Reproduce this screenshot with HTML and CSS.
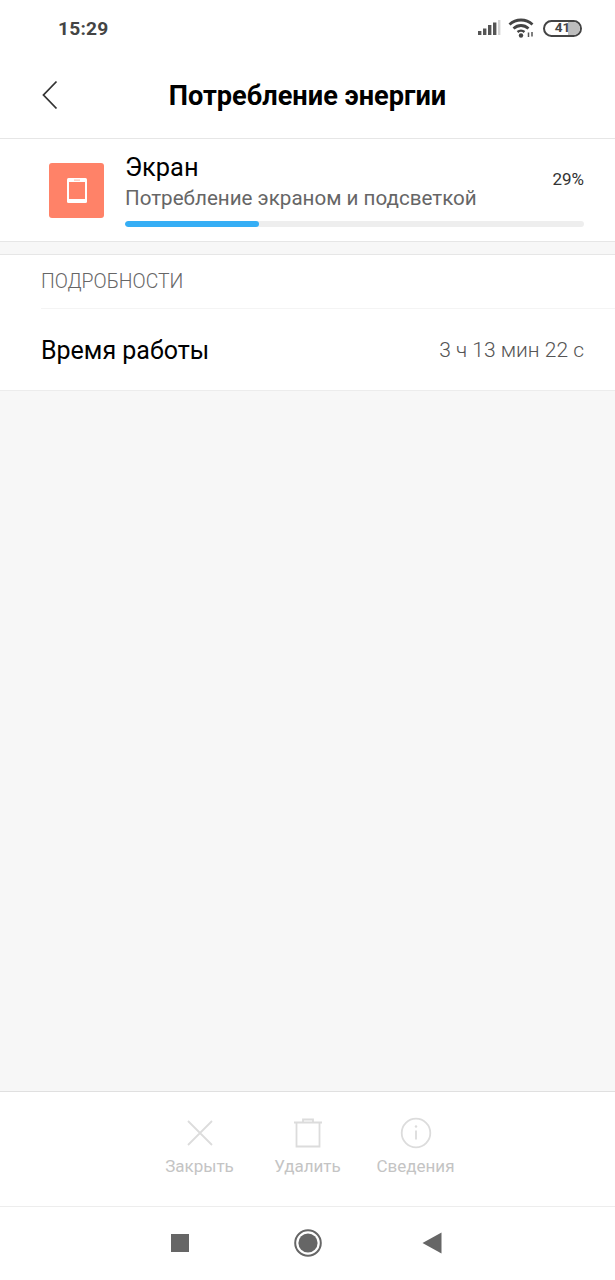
FILE: index.html
```html
<!DOCTYPE html>
<html lang="ru">
<head>
<meta charset="utf-8">
<title>Потребление энергии</title>
<link rel="stylesheet" href="styles.css">
</head>
<body>
<div class="screen">
  <div class="status">
    <span class="time">15:29</span>
    <div class="status-icons">
      <svg class="signal" width="24" height="18" viewBox="0 0 24 18">
        <rect x="1" y="12" width="3.4" height="4" fill="#555"/>
        <rect x="6" y="9.5" width="3.4" height="6.5" fill="#555"/>
        <rect x="11" y="6" width="3.4" height="10" fill="#555"/>
        <rect x="16" y="3.5" width="3.4" height="12.5" fill="#555"/>
        <rect x="21" y="1" width="2.4" height="15" fill="#d4d4d4"/>
      </svg>
      <svg class="wifi" width="28" height="20" viewBox="0 0 28 20">
        <path d="M1.5 6.5C8 .5 18 .5 24.500 6.500" fill="none" stroke="#444" stroke-width="2.800"/>
        <path d="M5.500 10.500C10 6.500 16 6.500 20.500 10.500" fill="none" stroke="#444" stroke-width="2.800"/>
        <path d="M9.500 14C11.500 12.300 14.500 12.300 16.500 14" fill="none" stroke="#444" stroke-width="2.400"/>
        <circle cx="13" cy="17.500" r="2.200" fill="#444"/>
        <path d="M20.500 19v-4.500M24 14v4.500" stroke="#555" stroke-width="1.500"/>
      </svg>
      <div class="battery"><div class="battery-fill"></div><span class="battery-num">41</span></div>
    </div>
  </div>

  <header class="header">
    <svg class="back" width="18" height="30" viewBox="0 0 18 30">
      <path d="M15.500 1.500 2.500 15l13 13.500" fill="none" stroke="#333" stroke-width="1.800"/>
    </svg>
    <h1 class="title">Потребление энергии</h1>
  </header>

  <section class="usage">
    <div class="app-icon">
      <svg width="20" height="25" viewBox="0 0 20 25">
        <rect x="0" y="0" width="20" height="25" rx="1.500" fill="#fff"/>
        <rect x="2" y="4" width="16" height="17" fill="#ff8268"/>
        <rect x="7" y="1.500" width="6" height="1.300" fill="#ffc6b8"/>
      </svg>
    </div>
    <div class="usage-body">
      <div class="usage-top">
        <div class="usage-text">
          <div class="usage-name">Экран</div>
          <div class="usage-desc">Потребление экраном и подсветкой</div>
        </div>
        <div class="usage-pct">29%</div>
      </div>
      <div class="bar"><div class="bar-fill" style="width:29.2%"></div></div>
    </div>
  </section>

  <div class="gap"></div>

  <section class="details">
    <div class="details-head">ПОДРОБНОСТИ</div>
    <div class="details-row">
      <span class="row-label">Время работы</span>
      <span class="row-value">3 ч 13 мин 22 с</span>
    </div>
  </section>

  <div class="filler"></div>

  <nav class="toolbar">
    <div class="tool">
      <svg width="32" height="32" viewBox="0 0 32 32">
        <path d="M4 4l24 24M28 4 4 28" stroke="#dcdcdc" stroke-width="1.800" fill="none"/>
      </svg>
      <span>Закрыть</span>
    </div>
    <div class="tool">
      <svg width="32" height="32" viewBox="0 0 32 32">
        <path d="M2 5.500h28M4.500 5.500v24h23v-24M11 5V2.500h10V5" stroke="#dcdcdc" stroke-width="1.800" fill="none"/>
      </svg>
      <span>Удалить</span>
    </div>
    <div class="tool">
      <svg width="32" height="32" viewBox="0 0 32 32">
        <circle cx="16" cy="16" r="14.300" stroke="#dcdcdc" stroke-width="1.800" fill="none"/>
        <path d="M16 13.500v9" stroke="#dcdcdc" stroke-width="1.800"/>
        <circle cx="16" cy="9.500" r="1.200" fill="#dcdcdc"/>
      </svg>
      <span>Сведения</span>
    </div>
  </nav>

  <nav class="sysnav">
    <svg width="20" height="20" viewBox="0 0 20 20"><rect x="1" y="1" width="18" height="18" fill="#666"/></svg>
    <svg width="28" height="28" viewBox="0 0 28 28">
      <circle cx="14" cy="14" r="12.800" fill="none" stroke="#666" stroke-width="2"/>
      <circle cx="14" cy="14" r="9.600" fill="#666"/>
    </svg>
    <svg class="sys-back" width="20" height="22" viewBox="0 0 20 22"><path d="M19.500 0.500v21L.5 11z" fill="#666"/></svg>
  </nav>
</div>
</body>
</html>
```
FILE: styles.css
```css
* { box-sizing: border-box; }
html, body { margin: 0; padding: 0; }
body { font-family: Roboto, "Noto Sans", sans-serif; background: #fff; }
.screen { width: 615px; height: 1280px; display: flex; flex-direction: column; background: #f7f7f7; overflow: hidden; }

.status { height: 56px; flex: none; background: #fff; display: flex; justify-content: space-between; align-items: center; padding: 0 33px 0 58px; }
.time { font-size: 19.2px; font-weight: 700; color: #444; letter-spacing: .2px; }
.status-icons { display: flex; align-items: center; }
.signal { margin-right: 7px; }
.wifi { margin-right: 7px; }
.battery { position: relative; width: 39px; height: 17px; border: 2px solid #444; border-radius: 9px; overflow: hidden; display: flex; align-items: center; justify-content: center; }
.battery-fill { position: absolute; right: 0; top: 0; bottom: 0; width: 12px; background: #bdbdbd; }
.battery-num { position: relative; font-size: 13.5px; font-weight: 700; color: #444; line-height: 1; }

.header { height: 83px; flex: none; background: #fff; border-bottom: 1px solid #e6e6e6; display: flex; align-items: center; justify-content: center; position: relative; padding-bottom: 3px; }
.back { position: absolute; left: 41px; top: 24px; }
.title { margin: 0; font-size: 27.2px; font-weight: 700; color: #000; line-height: 30px; }

.usage { height: 103px; flex: none; background: #fff; border-bottom: 1px solid #e6e6e6; display: flex; padding: 0 31px 0 49px; }
.app-icon { width: 55px; height: 55px; flex: none; margin-top: 24px; background: #ff8268; border-radius: 3px; display: flex; align-items: center; justify-content: center; }
.usage-body { flex: 1; margin-left: 21px; padding-top: 13px; }
.usage-top { display: flex; justify-content: space-between; }
.usage-name { font-size: 25.4px; line-height: 30px; color: #000; }
.usage-desc { font-size: 20.6px; line-height: 30px; color: #666; margin-top: 1px; }
.usage-pct { font-size: 17px; line-height: 20px; color: #333; margin-top: 17px; }
.bar { height: 6px; background: #eee; border-radius: 3px; margin-top: 8px; overflow: hidden; }
.bar-fill { height: 100%; background: #35aef5; border-radius: 3px; }

.gap { height: 13px; flex: none; border-bottom: 1px solid #e6e6e6; }

.details { flex: none; background: #fff; border-bottom: 1px solid #ececec; padding-left: 41px; }
.details-head { height: 54px; border-bottom: 1px solid #f4f4f4; font-size: 19.4px; font-weight: 300; color: #666; line-height: 53px; }
.details-row { height: 81px; display: flex; align-items: center; justify-content: space-between; padding: 1px 31px 0 0; }
.row-label { font-size: 25px; color: #000; }
.row-value { font-size: 21px; font-weight: 300; color: #555; }

.filler { flex: 1; }

.toolbar { height: 115px; flex: none; background: #fff; border-top: 1px solid #e0e0e0; display: flex; justify-content: center; gap: 30px; padding-top: 25px; }
.tool { display: flex; flex-direction: column; align-items: center; width: 78px; gap: 7px; }
.tool span { font-size: 17px; line-height: 20px; color: #c4c4c4; white-space: nowrap; }

.sysnav { height: 74px; flex: none; background: #fff; border-top: 1px solid #ededed; display: flex; align-items: center; justify-content: center; gap: 104px; padding-bottom: 2px; }
.sys-back { margin: 0 4px 0 -4px; }
```
